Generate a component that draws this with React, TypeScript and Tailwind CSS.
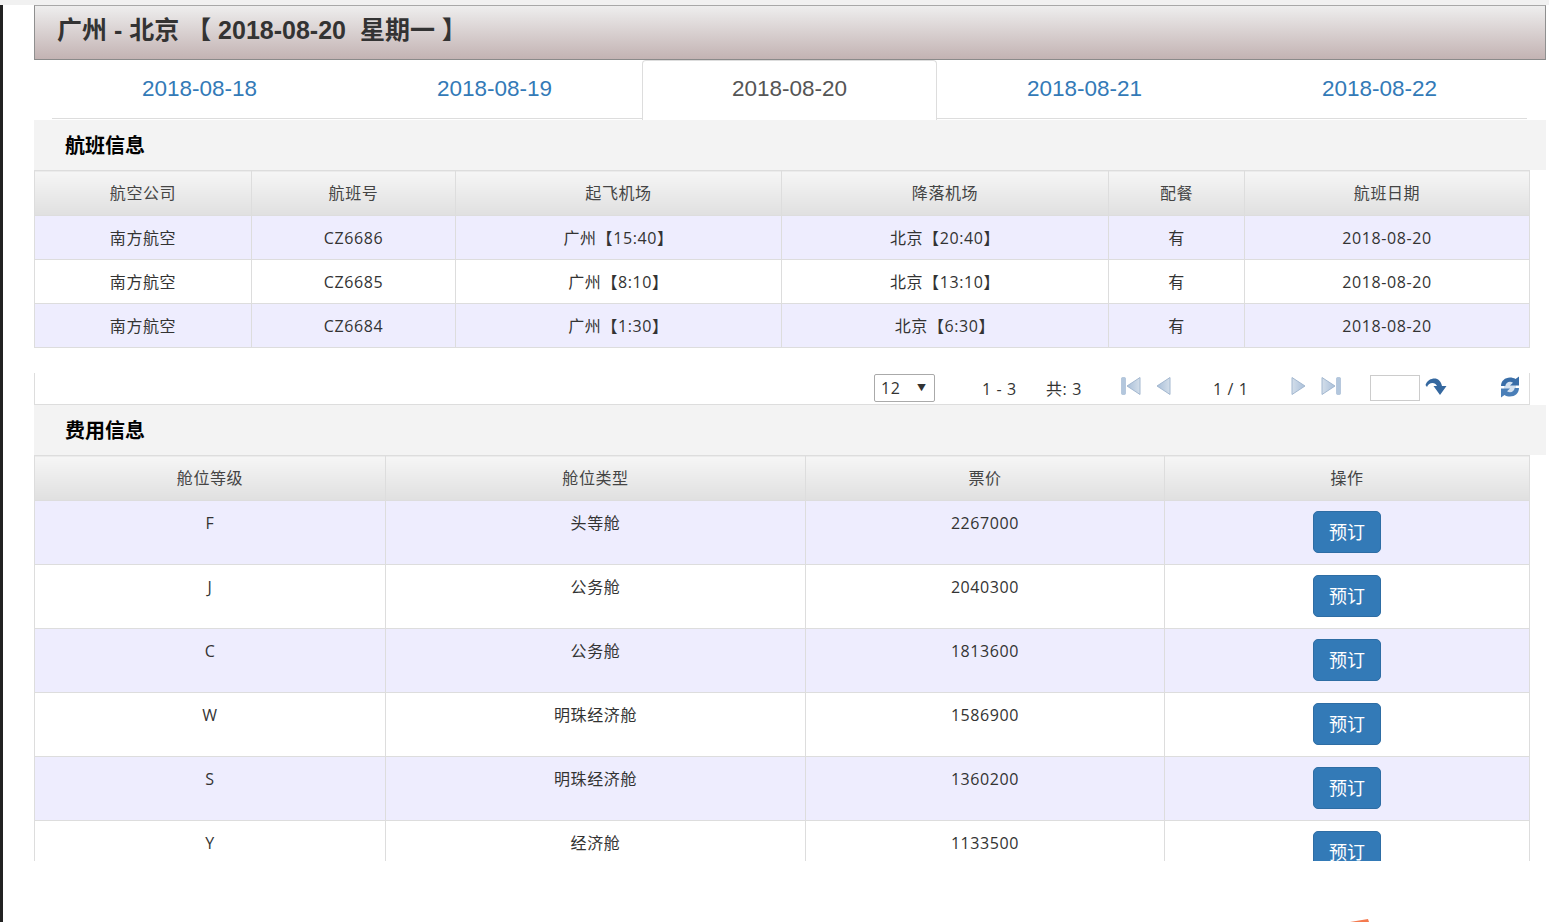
import React from 'react';

const latin = "font-['Open_Sans','Noto_Sans_CJK_SC',sans-serif]";

const flights = [
  ['南方航空', 'CZ6686', '广州【15:40】', '北京【20:40】', '有', '2018-08-20'],
  ['南方航空', 'CZ6685', '广州【8:10】', '北京【13:10】', '有', '2018-08-20'],
  ['南方航空', 'CZ6684', '广州【1:30】', '北京【6:30】', '有', '2018-08-20'],
];

const fares = [
  ['F', '头等舱', '2267000'],
  ['J', '公务舱', '2040300'],
  ['C', '公务舱', '1813600'],
  ['W', '明珠经济舱', '1586900'],
  ['S', '明珠经济舱', '1360200'],
  ['Y', '经济舱', '1133500'],
];

const tabs = ['2018-08-18', '2018-08-19', '2018-08-20', '2018-08-21', '2018-08-22'];

function Triangle({ flip, bar }: { flip?: boolean; bar?: boolean }) {
  return (
    <svg width={bar ? 20 : 15} height="20" viewBox={bar ? '0 0 20 20' : '0 0 15 20'}>
      <defs>
        <linearGradient id="pagerBlue" x1="0" y1="0" x2="1" y2="0">
          <stop offset="0" stopColor="#a9bfd9" />
          <stop offset="1" stopColor="#d3deea" />
        </linearGradient>
      </defs>
      <g transform={flip ? `translate(${bar ? 20 : 15},0) scale(-1,1)` : undefined}>
        {bar && <rect x="0.5" y="1.5" width="4" height="17" rx="1" fill="#b3c7dd" stroke="#9fb6d1" strokeWidth="0.6" />}
        <path
          d={bar ? 'M19 1.5V18.5L6 10Z' : 'M14 1.5V18.5L1 10Z'}
          fill="url(#pagerBlue)"
          stroke="#a3b8d0"
          strokeWidth="1"
          strokeLinejoin="round"
        />
      </g>
    </svg>
  );
}

function GoIcon() {
  return (
    <svg width="22" height="18" viewBox="0 0 22 18">
      <path
        d="M.5 7C2 2.5 6 .5 9.5 .5C13 .5 16 3 17 8H21.5L15 17L8.5 8H12C11 6 9.5 5 7.5 5C5 5 3 6.5 2 9Z"
        fill="#35689f"
      />
    </svg>
  );
}

function RefreshIcon() {
  const arc = 'M1 10C1 5 5 1.5 10 1.5C12 1.5 14 2 15.5 3L19 .5V9.5H10L13 6.8C12 6 11 5.7 10 5.7C7.5 5.7 5.7 7.5 5.3 10Z';
  return (
    <svg width="20" height="22" viewBox="0 0 20 22">
      <rect x="4" y="5" width="12" height="12" fill="#d5e2f0" />
      <path d={arc} fill="#3a6ea8" />
      <path d={arc} fill="#4a7fb8" transform="rotate(180 10 11)" />
    </svg>
  );
}

function SectionTitle({ children }: { children: React.ReactNode }) {
  return (
    <h3 className="h-[50px] pl-[31px] pt-[2px] bg-[#f3f3f3] flex items-center text-[20px] font-bold text-black font-['Liberation_Sans','Noto_Sans_CJK_SC',sans-serif]">
      {children}
    </h3>
  );
}

function Th({ children, width }: { children: React.ReactNode; width: number }) {
  return (
    <th
      style={{ width }}
      className="h-[45px] p-0 border border-[#dddddd] bg-gradient-to-b from-[#f6f6f6] to-[#e0e0e0] font-normal text-[#444444] text-[16px] text-center"
    >
      {children}
    </th>
  );
}

export default function App() {
  return (
    <div className={`w-[1549px] h-[922px] overflow-hidden bg-white relative text-[16px] text-[#333333] ${latin}`}>
      <div className="h-[5px] bg-[#f1f1f1]" />
      <div className="flex h-[917px]">
        <div className="w-[3px] bg-[#222222] shrink-0" />
        <div className="ml-[31px] w-[1512px] h-[856px] overflow-hidden">
          <div className="h-[55px] pl-[22px] pb-[3px] flex items-center border border-t-[#a8a8a8] border-x-[#8f8f8f] border-b-[#8a8a8a] bg-gradient-to-b from-[#eeeeee] to-[#c3b3b3] font-['Liberation_Sans','Noto_Sans_CJK_SC',sans-serif] font-bold text-[25px] text-[#333333] whitespace-pre">
            广州 - 北京 【 2018-08-20&nbsp;&nbsp;星期一 】
          </div>

          <div className="h-[59px] mb-[1px] w-[1475px] ml-[18px] flex items-start border-b border-[#dddddd] font-['Liberation_Sans',sans-serif] text-[22.5px]">
            {tabs.map((t, i) =>
              i === 2 ? (
                <div
                  key={t}
                  className="w-[295px] h-[60px] pb-[3px] flex items-center justify-center bg-white border border-[#dddddd] border-b-0 rounded-t-[4px] text-[#555555]"
                >
                  {t}
                </div>
              ) : (
                <div key={t} className="w-[295px] h-[58px] flex items-center justify-center text-[#337ab7]">
                  {t}
                </div>
              ),
            )}
          </div>

          <SectionTitle>航班信息</SectionTitle>
          <table className="w-[1495px] table-fixed border-collapse tracking-[0.6px]">
            <thead>
              <tr>
                <Th width={217}>航空公司</Th>
                <Th width={204}>航班号</Th>
                <Th width={326}>起飞机场</Th>
                <Th width={327}>降落机场</Th>
                <Th width={136}>配餐</Th>
                <Th width={285}>航班日期</Th>
              </tr>
            </thead>
            <tbody>
              {flights.map((row, i) => (
                <tr key={row[1]} className={i % 2 === 0 ? 'bg-[#eeedfe]' : 'bg-white'}>
                  {row.map((c, j) => (
                    <td key={j} className="h-[44px] p-0 border border-[#dddddd] text-center">
                      {c}
                    </td>
                  ))}
                </tr>
              ))}
            </tbody>
          </table>

          <div className="w-[1496px] h-[32px] mt-[25px] border-x border-b border-[#dddddd] flex items-center tracking-[0.6px]">
            <div className="ml-[839px] mb-[2px] w-[61px] h-[28px] border border-[#aaaaaa] rounded-[2px] flex items-center justify-between pl-[6px] pr-[8px]">
              <span>12</span>
              <span className="text-[9px] tracking-normal text-[#333333]">▼</span>
            </div>
            <span className="ml-[47px] w-[36px] whitespace-nowrap">1 - 3</span>
            <span className="ml-[28px] w-[35px] whitespace-nowrap">共: 3</span>
            <span className="ml-[40px] mb-[5px] flex"><Triangle bar /></span>
            <span className="ml-[15px] mb-[5px] flex"><Triangle /></span>
            <span className="ml-[42px] w-[36px] whitespace-nowrap">1 / 1</span>
            <span className="ml-[42px] mb-[5px] flex"><Triangle flip /></span>
            <span className="ml-[15px] mb-[5px] flex"><Triangle flip bar /></span>
            <div className="ml-[29px] mb-[2px] w-[50px] h-[26px] border border-[#cccccc] bg-white" />
            <span className="ml-[5px] flex mb-[3px]"><GoIcon /></span>
            <span className="ml-[53px] flex mb-[3px]"><RefreshIcon /></span>
          </div>

          <SectionTitle>费用信息</SectionTitle>
          <table className="w-[1495px] table-fixed border-collapse tracking-[0.6px]">
            <thead>
              <tr>
                <Th width={351}>舱位等级</Th>
                <Th width={420}>舱位类型</Th>
                <Th width={359}>票价</Th>
                <Th width={365}>操作</Th>
              </tr>
            </thead>
            <tbody>
              {fares.map((row, i) => (
                <tr key={row[0]} className={i % 2 === 0 ? 'bg-[#eeedfe]' : 'bg-white'}>
                  {row.map((c, j) => (
                    <td key={j} className="h-[64px] p-0 pt-[10px] align-top border border-[#dddddd] text-center">
                      {c}
                    </td>
                  ))}
                  <td className="h-[64px] p-0 align-top border border-[#dddddd] text-center">
                    <button className="mt-[10px] w-[68px] h-[42px] rounded-[5px] bg-[#337ab7] border border-[#2e6da4] text-white text-[18px] tracking-normal">
                      预订
                    </button>
                  </td>
                </tr>
              ))}
            </tbody>
          </table>
        </div>
      </div>
      <svg className="absolute left-[1350px] top-[919px]" width="19" height="3" viewBox="0 0 19 3">
        <path d="M0 3L18 0L19 3Z" fill="#f47a4f" />
      </svg>
    </div>
  );
}
